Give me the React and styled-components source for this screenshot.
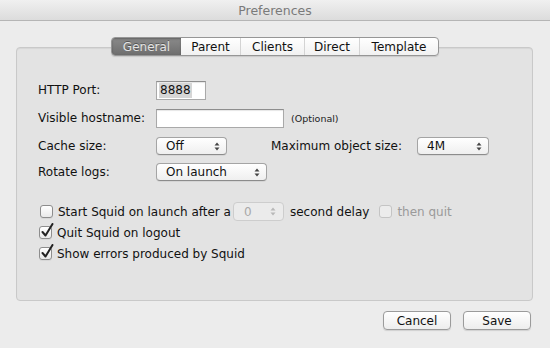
import React from "react";
import styled, { createGlobalStyle } from "styled-components";

const GlobalStyle = createGlobalStyle`
  html, body {
    margin: 0;
    padding: 0;
    background: #ececec;
  }
  body {
    font-family: "DejaVu Sans", "Liberation Sans", sans-serif;
    font-size: 12px;
    color: #111;
  }
`;

const Window = styled.div`
  width: 550px;
  height: 348px;
  background: #ececec;
  display: flex;
  flex-direction: column;
  overflow: hidden;
`;

const TitleBar = styled.div`
  height: 20px;
  flex: none;
  display: flex;
  align-items: center;
  justify-content: center;
  background: linear-gradient(#f0f0f0, #dcdcdc);
  border-bottom: 1px solid #b5b5b5;
  color: #7a7a7a;
  font-size: 12.5px;
`;

const Body = styled.div`
  flex: 1;
  display: flex;
  flex-direction: column;
  padding: 16px 17px 0 16px;
`;

const TabBar = styled.div`
  position: relative;
  z-index: 1;
  align-self: center;
  display: flex;
  height: 17px;
  margin-left: 1px;
  margin-bottom: -9px;
  border: 1px solid #969696;
  border-radius: 4px;
  background: linear-gradient(#ffffff, #f1f1f1);
  box-shadow: 0 1px 1px rgba(0, 0, 0, 0.12);
  overflow: hidden;
`;

const Tab = styled.div`
  width: ${(p) => p.$w}px;
  display: flex;
  align-items: center;
  justify-content: center;
  font-size: 12px;
  color: ${(p) => (p.$active ? "#e4e4e4" : "#111")};
  background: ${(p) =>
    p.$active ? "linear-gradient(#8a8a8a, #6e6e6e)" : "transparent"};
  text-shadow: ${(p) => (p.$active ? "0 -1px 0 rgba(0,0,0,0.35)" : "none")};
  box-shadow: ${(p) => (p.$active ? "inset 0 1px 2px rgba(0,0,0,0.3)" : "none")};
  border-left: ${(p) => (p.$divider ? "1px solid #d4d4d4" : "none")};
  box-sizing: border-box;
`;

const GroupBox = styled.div`
  height: 254px;
  box-sizing: border-box;
  background: #e3e3e3;
  border: 1px solid #c9c9c9;
  border-radius: 4px;
  box-shadow: inset 0 1px 1px rgba(0, 0, 0, 0.06);
  padding: 32px 0 0 21px;
  display: flex;
  flex-direction: column;
`;

const Row = styled.div`
  display: flex;
  align-items: center;
  height: 20px;
  margin-bottom: ${(p) => p.$mb || 0}px;
`;

const Label = styled.div`
  width: ${(p) => p.$w || 118}px;
  margin-left: ${(p) => p.$ml || 0}px;
  flex: none;
  color: #111;
`;

const TextField = styled.div`
  width: ${(p) => p.$w}px;
  height: 19px;
  box-sizing: border-box;
  background: #fff;
  border: 1px solid #a9a9a9;
  border-top-color: #8e8e8e;
  box-shadow: inset 0 1px 1px rgba(0, 0, 0, 0.1);
  display: flex;
  align-items: center;
  padding-left: 2px;
`;

const Selection = styled.span`
  background: #d6d6d6;
  padding: 0 1px;
  line-height: 15px;
`;

const Hint = styled.span`
  margin-left: 7px;
  font-size: 9.5px;
  color: #222;
`;

const Select = styled.div`
  width: ${(p) => p.$w}px;
  height: 18px;
  box-sizing: border-box;
  border: 1px solid #a4a4a4;
  border-bottom-color: #8c8c8c;
  border-radius: 4px;
  background: linear-gradient(#ffffff, #efefef);
  box-shadow: 0 1px 0 rgba(0, 0, 0, 0.06);
  display: flex;
  align-items: center;
  justify-content: space-between;
  padding: 0 6px 0 9px;
  color: #111;
`;

const Arrows = ({ color = "#444" }) => (
  <svg width="6" height="9" viewBox="0 0 6 9">
    <path d="M3 0.5 L5.5 3.5 L0.5 3.5 Z" fill={color} />
    <path d="M3 8.5 L5.5 5.5 L0.5 5.5 Z" fill={color} />
  </svg>
);

const Stepper = styled.div`
  width: 51px;
  height: 19px;
  box-sizing: border-box;
  margin: 0 6px 0 2px;
  border: 1px solid #cdcdcd;
  border-radius: 4px;
  background: #ebebeb;
  display: flex;
  align-items: center;
  justify-content: space-between;
  padding: 0 7px 0 10px;
  color: #a8a8a8;
`;

const CheckRow = styled.div`
  display: flex;
  align-items: center;
  height: 21px;
  margin-left: 1px;
  color: ${(p) => (p.$disabled ? "#9a9a9a" : "#111")};
`;

const Box = styled.span`
  width: 13px;
  height: 13px;
  box-sizing: border-box;
  flex: none;
  margin-right: 5px;
  border: 1px solid ${(p) => (p.$disabled ? "#c4c4c4" : "#8d8d8d")};
  border-radius: 3px;
  background: ${(p) =>
    p.$disabled ? "#ececec" : "linear-gradient(#ffffff, #e9e9e9)"};
  box-shadow: ${(p) => (p.$disabled ? "none" : "0 1px 0 rgba(0,0,0,0.05)")};
  position: relative;
`;

const Tick = styled.svg`
  position: absolute;
  left: 1px;
  top: -4px;
`;

const Inline = styled.div`
  display: flex;
  align-items: center;
  margin-left: ${(p) => p.$ml || 0}px;
`;

const Footer = styled.div`
  display: flex;
  justify-content: flex-end;
  gap: 12px;
  padding: 10px 2px 0 0;
`;

const Button = styled.div`
  width: 68px;
  height: 19px;
  box-sizing: border-box;
  border: 1px solid #9b9b9b;
  border-radius: 4px;
  background: linear-gradient(#ffffff, #ededed);
  box-shadow: 0 1px 1px rgba(0, 0, 0, 0.12);
  display: flex;
  align-items: center;
  justify-content: center;
  color: #111;
`;

const Check = ({ checked, disabled, children }) => (
  <CheckRow $disabled={disabled}>
    <Box $disabled={disabled}>
      {checked && (
        <Tick width="13" height="15" viewBox="0 0 13 15">
          <path
            d="M1.5 9 L4.5 12.5 L11.5 1"
            stroke="#222"
            strokeWidth="2"
            fill="none"
            strokeLinecap="round"
            strokeLinejoin="round"
          />
        </Tick>
      )}
    </Box>
    {children}
  </CheckRow>
);

const tabs = [
  { name: "General", w: 69 },
  { name: "Parent", w: 59 },
  { name: "Clients", w: 64 },
  { name: "Direct", w: 55 },
  { name: "Template", w: 79 },
];

export default function App() {
  return (
    <Window>
      <GlobalStyle />
      <TitleBar>Preferences</TitleBar>
      <Body>
        <TabBar>
          {tabs.map((t, i) => (
            <Tab key={t.name} $w={t.w} $active={i === 0} $divider={i > 1}>
              {t.name}
            </Tab>
          ))}
        </TabBar>
        <GroupBox>
          <Row $mb={8}>
            <Label>HTTP Port:</Label>
            <TextField $w={50}>
              <Selection>8888</Selection>
            </TextField>
          </Row>
          <Row $mb={8}>
            <Label>Visible hostname:</Label>
            <TextField $w={128} />
            <Hint>(Optional)</Hint>
          </Row>
          <Row $mb={6}>
            <Label>Cache size:</Label>
            <Select $w={71}>
              Off
              <Arrows />
            </Select>
            <Label $w={146} $ml={44}>
              Maximum object size:
            </Label>
            <Select $w={72}>
              4M
              <Arrows />
            </Select>
          </Row>
          <Row $mb={19}>
            <Label>Rotate logs:</Label>
            <Select $w={111}>
              On launch
              <Arrows />
            </Select>
          </Row>
          <CheckRow>
            <Check>Start Squid on launch after a</Check>
            <Stepper>
              0
              <Arrows color="#b8b8b8" />
            </Stepper>
            second delay
            <Inline $ml={9}>
              <Check disabled>then quit</Check>
            </Inline>
          </CheckRow>
          <Check checked>Quit Squid on logout</Check>
          <Check checked>Show errors produced by Squid</Check>
        </GroupBox>
        <Footer>
          <Button>Cancel</Button>
          <Button>Save</Button>
        </Footer>
      </Body>
    </Window>
  );
}
